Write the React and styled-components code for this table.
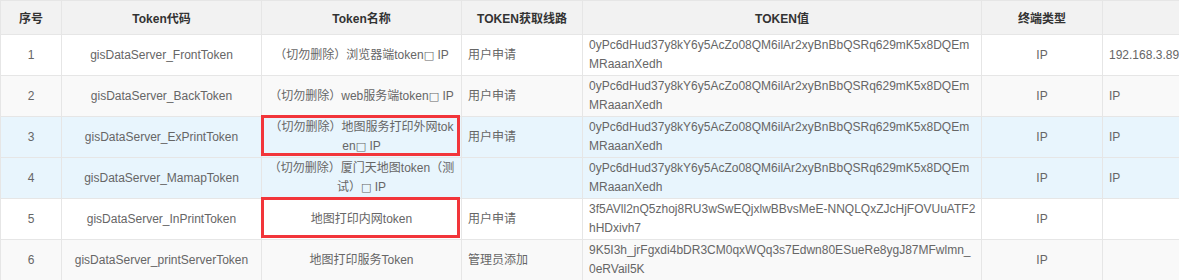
import React from 'react'
import styled, { createGlobalStyle } from 'styled-components'

const GlobalStyle = createGlobalStyle`
  html, body {
    margin: 0;
    padding: 0;
    background: #fff;
    overflow: hidden;
  }
  body {
    font-family: "Liberation Sans", Arial, "Noto Sans CJK SC", sans-serif;
    font-size: 12px;
    color: #666;
  }
`;

const Table = styled.table `
  border-collapse: collapse;
  table-layout: fixed;
  width: 1232px;
  border: 1px solid #e6e6e6;
`;

const Th = styled.th `
  height: 33px;
  padding: 0 5px;
  background: #f2f2f2;
  border: 1px solid #e6e6e6;
  color: #333;
  font-weight: bold;
  text-align: center;
`;

const Row = styled.tr `
  background: ${p => p.$active ? '#e8f5fd' : p.$even ? '#f9f9f9' : '#fff'};
`;

const Td = styled.td `
  position: relative;
  height: 41px;
  box-sizing: border-box;
  padding: ${p => p.$left ? '0 4px 0 6px' : '0 5px'};
  border: 1px solid #e6e6e6;
  line-height: 19px;
  text-align: ${p => p.$left ? 'left' : 'center'};
  word-break: break-all;
  vertical-align: middle;

  ${p => p.$marked && `
    &::after {
      content: "";
      position: absolute;
      top: -2px;
      left: -1px;
      right: 1px;
      bottom: 1px;
      border: 3px solid #f2353a;
      pointer-events: none;
    }
  `}
`;

const Tofu = styled.span `
  font-family: "DejaVu Sans", sans-serif;
  font-size: 11px;
`;

const TOKEN_A = '0yPc6dHud37y8kY6y5AcZo08QM6ilAr2xyBnBbQSRq629mK5x8DQEmMRaaanXedh';

const rows = [
  { no: 1, code: 'gisDataServer_FrontToken', name: ['（切勿删除）浏览器端token', true], route: '用户申请', token: TOKEN_A, type: 'IP', extra: '192.168.3.89' },
  { no: 2, code: 'gisDataServer_BackToken', name: ['（切勿删除）web服务端token', true], route: '用户申请', token: TOKEN_A, type: 'IP', extra: 'IP' },
  { no: 3, code: 'gisDataServer_ExPrintToken', name: ['（切勿删除）地图服务打印外网token', true], route: '用户申请', token: TOKEN_A, type: 'IP', extra: 'IP', active: true, marked: true },
  { no: 4, code: 'gisDataServer_MamapToken', name: ['（切勿删除）厦门天地图token（测试）', true], route: '', token: TOKEN_A, type: 'IP', extra: 'IP', active: true },
  { no: 5, code: 'gisDataServer_InPrintToken', name: ['地图打印内网token', false], route: '用户申请', token: '3f5AVll2nQ5zhoj8RU3wSwEQjxlwBBvsMeE-NNQLQxZJcHjFOVUuATF2hHDxivh7', type: 'IP', extra: '', marked: true },
  { no: 6, code: 'gisDataServer_printServerToken', name: ['地图打印服务Token', false], route: '管理员添加', token: '9K5I3h_jrFgxdi4bDR3CM0qxWQq3s7Edwn80ESueRe8ygJ87MFwlmn_0eRVail5K', type: 'IP', extra: '' },
];

const widths = [61, 200, 200, 121, 399, 121, 130];

export default function App() {
  return (
    <>
      <GlobalStyle />
      <Table>
        <colgroup>
          {widths.map((w, i) => <col key={i} style={{ width: w }} />)}
        </colgroup>
        <thead>
          <tr>
            <Th>序号</Th>
            <Th>Token代码</Th>
            <Th>Token名称</Th>
            <Th>TOKEN获取线路</Th>
            <Th>TOKEN值</Th>
            <Th>终端类型</Th>
            <Th></Th>
          </tr>
        </thead>
        <tbody>
          {rows.map(r => (
            <Row key={r.no} $even={r.no % 2 === 0} $active={r.active}>
              <Td>{r.no}</Td>
              <Td>{r.code}</Td>
              <Td $marked={r.marked}>
                {r.name[0]}
                {r.name[1] && <><Tofu>□</Tofu> IP</>}
              </Td>
              <Td $left>{r.route}</Td>
              <Td $left>{r.token}</Td>
              <Td>{r.type}</Td>
              <Td $left>{r.extra}</Td>
            </Row>
          ))}
        </tbody>
      </Table>
    </>
  );
}
